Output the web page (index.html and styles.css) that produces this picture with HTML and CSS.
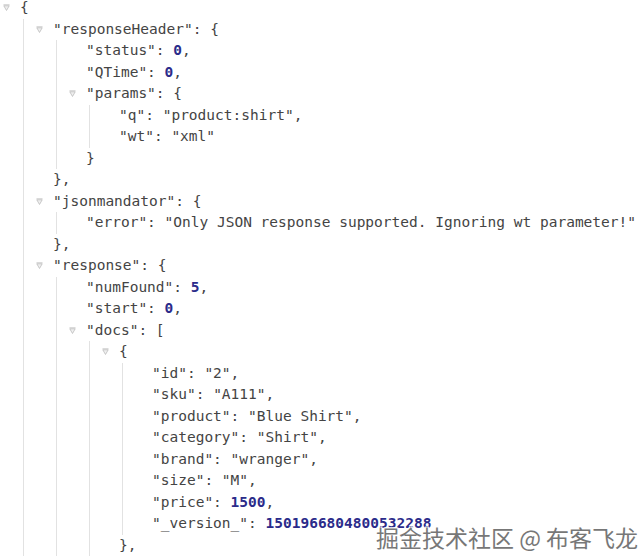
FILE: index.html
```html
<!DOCTYPE html>
<html>
<head>
<meta charset="utf-8">
<link rel="stylesheet" href="styles.css">
</head>
<body>
<div class="viewer">
  <div class="node">
    <div class="line"><span class="tog"></span>{</div>
    <div class="kids">
      <div class="node">
        <div class="line"><span class="tog"></span><span class="k">"responseHeader"</span>: {</div>
        <div class="kids">
          <div class="line"><span class="k">"status"</span>: <span class="n">0</span>,</div>
          <div class="line"><span class="k">"QTime"</span>: <span class="n">0</span>,</div>
          <div class="node">
            <div class="line"><span class="tog"></span><span class="k">"params"</span>: {</div>
            <div class="kids">
              <div class="line"><span class="k">"q"</span>: <span class="s">"product:shirt"</span>,</div>
              <div class="line"><span class="k">"wt"</span>: <span class="s">"xml"</span></div>
            </div>
            <div class="line">}</div>
          </div>
        </div>
        <div class="line">},</div>
      </div>
      <div class="node">
        <div class="line"><span class="tog"></span><span class="k">"jsonmandator"</span>: {</div>
        <div class="kids">
          <div class="line"><span class="k">"error"</span>: <span class="s">"Only JSON response supported. Ignoring wt parameter!"</span></div>
        </div>
        <div class="line">},</div>
      </div>
      <div class="node">
        <div class="line"><span class="tog"></span><span class="k">"response"</span>: {</div>
        <div class="kids">
          <div class="line"><span class="k">"numFound"</span>: <span class="n">5</span>,</div>
          <div class="line"><span class="k">"start"</span>: <span class="n">0</span>,</div>
          <div class="node">
            <div class="line"><span class="tog"></span><span class="k">"docs"</span>: [</div>
            <div class="kids">
              <div class="node">
                <div class="line"><span class="tog"></span>{</div>
                <div class="kids">
                  <div class="line"><span class="k">"id"</span>: <span class="s">"2"</span>,</div>
                  <div class="line"><span class="k">"sku"</span>: <span class="s">"A111"</span>,</div>
                  <div class="line"><span class="k">"product"</span>: <span class="s">"Blue Shirt"</span>,</div>
                  <div class="line"><span class="k">"category"</span>: <span class="s">"Shirt"</span>,</div>
                  <div class="line"><span class="k">"brand"</span>: <span class="s">"wranger"</span>,</div>
                  <div class="line"><span class="k">"size"</span>: <span class="s">"M"</span>,</div>
                  <div class="line"><span class="k">"price"</span>: <span class="n">1500</span>,</div>
                  <div class="line"><span class="k">"_version_"</span>: <span class="n">1501966804800532288</span></div>
                </div>
                <div class="line">},</div>
              </div>
            </div>
          </div>
        </div>
      </div>
    </div>
  </div>
</div>
<div class="watermark">掘金技术社区 @ 布客飞龙</div>
</body>
</html>
```
FILE: styles.css
```css
html, body {
  margin: 0;
  padding: 0;
  background: #fff;
  overflow: hidden;
  width: 640px;
  height: 560px;
}
.viewer {
  margin-top: -3px;
  padding-left: 20px;
  font-family: "DejaVu Sans Mono", "Liberation Mono", monospace;
  font-size: 14.5px;
  color: #444;
  white-space: nowrap;
}
.line {
  position: relative;
  height: 21.5px;
  line-height: 21.5px;
}
.kids {
  margin-left: 3px;
  padding-left: 29px;
  border-left: 1px solid #e2e2e2;
}
.tog {
  position: absolute;
  left: -17px;
  top: 7px;
  width: 7px;
  height: 7px;
  background: no-repeat center / 7px 7px url("data:image/svg+xml,%3Csvg xmlns='http://www.w3.org/2000/svg' viewBox='0 0 7 7'%3E%3Cpath d='M0.5 0.8 H6.5 M0.8 1.8 H6.2 L3.5 6.5 Z' fill='%23efefef' stroke='%23bdbdbd' stroke-width='0.8'/%3E%3C/svg%3E");
}
.n {
  color: #2b2b8a;
  font-weight: bold;
}
.watermark {
  position: absolute;
  left: 376px;
  top: 520px;
  font-family: "Noto Sans CJK SC", sans-serif;
  font-size: 23px;
  color: #777;
  text-shadow: 1px 1px 0 #fff, -1px -1px 0 #fff, 1px -1px 0 #fff, -1px 1px 0 #fff;
  white-space: nowrap;
}
```
